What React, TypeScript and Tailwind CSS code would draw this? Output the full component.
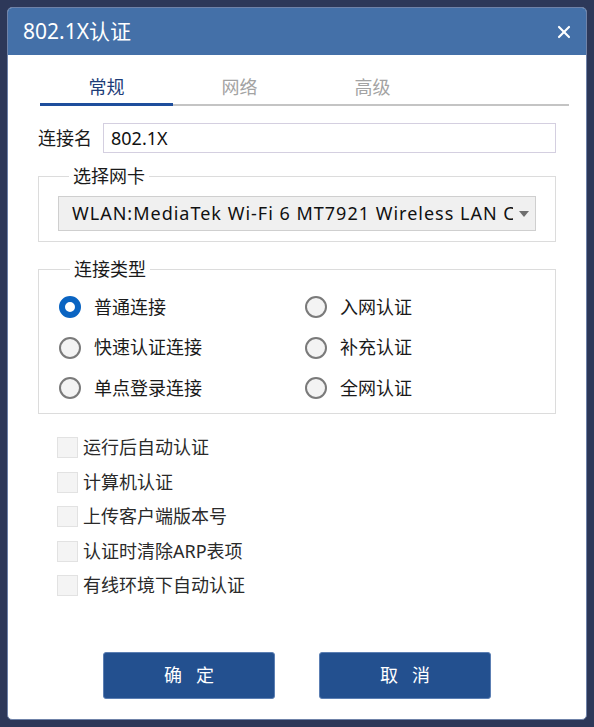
import React, { useState } from 'react';
import { X } from 'lucide-react';

const font = { fontFamily: '"Noto Sans", "Noto Sans CJK SC", "Microsoft YaHei", sans-serif' };

const tabs = ['常规', '网络', '高级'];

const radios = [
  ['普通连接', '入网认证'],
  ['快速认证连接', '补充认证'],
  ['单点登录连接', '全网认证'],
];

const checks = ['运行后自动认证', '计算机认证', '上传客户端版本号', '认证时清除ARP表项', '有线环境下自动认证'];

const Radio: React.FC<{ label: string; checked: boolean; onClick: () => void }> = ({ label, checked, onClick }) => (
  <div className="flex items-center h-[40.5px] cursor-default" onClick={onClick}>
    {checked ? (
      <span className="w-[22px] h-[22px] rounded-full border-[6px] border-[#0a64c2] bg-white shrink-0" />
    ) : (
      <span className="w-[22px] h-[22px] rounded-full border-2 border-[#7a7a7a] bg-[#f3f3f3] shrink-0" />
    )}
    <span className="ml-[13px] text-[18px] text-[#1a1a1a]">{label}</span>
  </div>
);

export default function App() {
  const [tab, setTab] = useState(0);
  const [mode, setMode] = useState('普通连接');

  return (
    <div style={font} className="w-[594px] h-[727px] bg-[#2d3859] p-[7px]">
      <div className="w-[580px] h-[713px] rounded-[5px] overflow-hidden border border-[#6f82a8] bg-white flex flex-col">
        {/* title bar */}
        <div className="h-[47px] bg-[#4470a8] flex items-center justify-between pl-[15px] pr-[12px] shrink-0">
          <span className="text-white text-[21px] leading-none">802.1X认证</span>
          <X size={20} strokeWidth={2.6} className="text-white" />
        </div>

        {/* tabs */}
        <div className="flex items-end ml-[32px] mr-[17px] mt-[16px] h-[35px]">
          {tabs.map((t, i) => (
            <div
              key={t}
              onClick={() => setTab(i)}
              className={
                i === tab
                  ? 'w-[133px] h-full flex items-center justify-center text-[18px] text-[#1d3d78] border-b-[3px] border-[#1e4e9c]'
                  : 'w-[133px] h-full flex items-center justify-center text-[18px] text-[#a3a3a3] border-b-2 border-[#c4c4c4]'
              }
            >
              {t}
            </div>
          ))}
          <div className="flex-1 h-full border-b-2 border-[#c4c4c4]" />
        </div>

        {/* connection name */}
        <div className="flex items-center mt-[17px] ml-[30px] mr-[30px]">
          <span className="text-[18px] text-[#1a1a1a] w-[65px] leading-none">连接名</span>
          <div className="flex-1 h-[30px] border border-[#d4cfe0] flex items-center pl-[7px] text-[18px] text-[#111]">
            802.1X
          </div>
        </div>

        {/* network card */}
        <fieldset className="mt-[11px] mx-[30px] border border-[#dcdcdc] px-[19px] pt-[8px] pb-[10px] min-w-0">
          <legend className="ml-[11px] px-[4px] text-[18px] text-[#1a1a1a] leading-[24px]">选择网卡</legend>
          <div className="h-[35px] bg-[#f0f0f0] border border-[#cfcfcf] flex items-center">
            <div className="flex-1 min-w-0 overflow-hidden whitespace-nowrap pl-[13px] text-[18px] tracking-[1px] text-[#111]">
              WLAN:MediaTek Wi-Fi 6 MT7921 Wireless LAN Card
            </div>
            <div className="w-[22px] flex justify-center shrink-0">
              <svg width="10" height="6" viewBox="0 0 10 6">
                <path d="M0 0 L10 0 L5 6 Z" fill="#6e6e6e" />
              </svg>
            </div>
          </div>
        </fieldset>

        {/* connection type */}
        <fieldset className="mt-[15px] mx-[30px] border border-[#dcdcdc] pl-[20px] pt-[6px] pb-[4px]">
          <legend className="ml-[11px] px-[4px] text-[18px] text-[#1a1a1a] leading-[24px]">连接类型</legend>
          <div className="grid grid-cols-[246px_1fr]">
            {radios.flat().map((r) => (
              <Radio key={r} label={r} checked={mode === r} onClick={() => setMode(r)} />
            ))}
          </div>
        </fieldset>

        {/* options */}
        <div className="mt-[17px] ml-[49px] flex flex-col">
          {checks.map((c) => (
            <div key={c} className="flex items-center h-[34.5px]">
              <span className="w-[21px] h-[21px] border border-[#e2e2e2] bg-[#f4f4f4] shrink-0" />
              <span className="ml-[5px] text-[18px] text-[#2a2a2a]">{c}</span>
            </div>
          ))}
        </div>

        {/* buttons */}
        <div className="flex justify-center gap-[44px] mt-[49px]">
          <button className="w-[172px] h-[47px] rounded-[3px] bg-[#23508f] border border-[#5c7fb3] text-white text-[18px] flex items-center justify-center">
            <span className="tracking-[14px] mr-[-14px]">确定</span>
          </button>
          <button className="w-[172px] h-[47px] rounded-[3px] bg-[#23508f] border border-[#5c7fb3] text-white text-[18px] flex items-center justify-center">
            <span className="tracking-[14px] mr-[-14px]">取消</span>
          </button>
        </div>
      </div>
    </div>
  );
}
